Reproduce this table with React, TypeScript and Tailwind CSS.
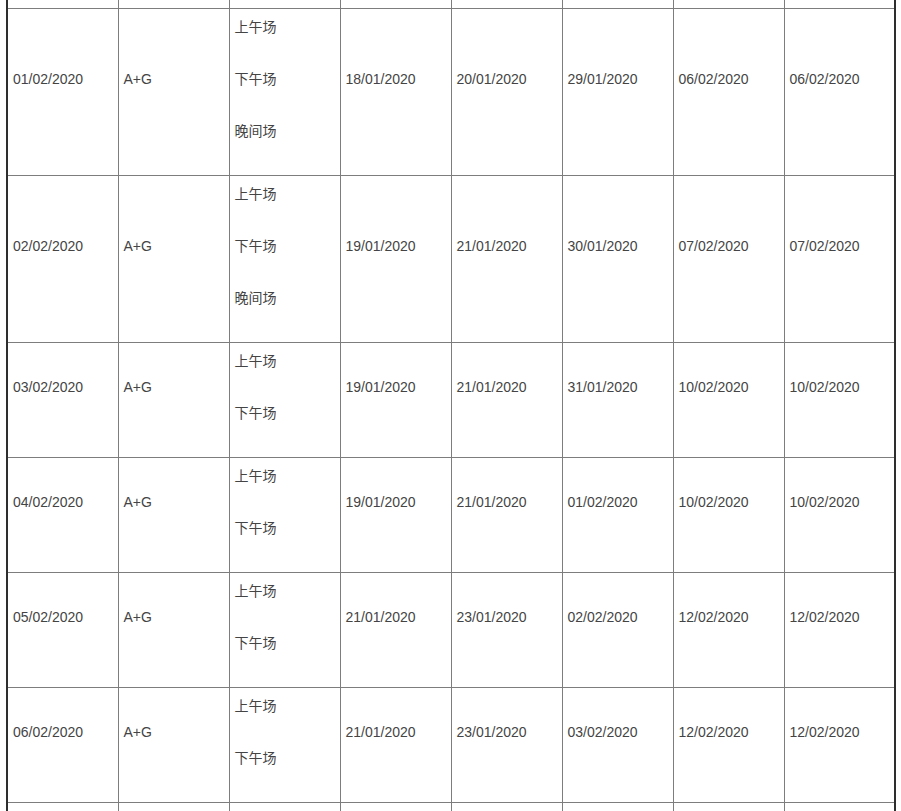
import React from "react";

type Row = {
  date: string;
  group: string;
  sessions: string[];
  dates: string[];
};

const rows: Row[] = [
  {
    date: "01/02/2020",
    group: "A+G",
    sessions: ["上午场", "下午场", "晚间场"],
    dates: ["18/01/2020", "20/01/2020", "29/01/2020", "06/02/2020", "06/02/2020"],
  },
  {
    date: "02/02/2020",
    group: "A+G",
    sessions: ["上午场", "下午场", "晚间场"],
    dates: ["19/01/2020", "21/01/2020", "30/01/2020", "07/02/2020", "07/02/2020"],
  },
  {
    date: "03/02/2020",
    group: "A+G",
    sessions: ["上午场", "下午场"],
    dates: ["19/01/2020", "21/01/2020", "31/01/2020", "10/02/2020", "10/02/2020"],
  },
  {
    date: "04/02/2020",
    group: "A+G",
    sessions: ["上午场", "下午场"],
    dates: ["19/01/2020", "21/01/2020", "01/02/2020", "10/02/2020", "10/02/2020"],
  },
  {
    date: "05/02/2020",
    group: "A+G",
    sessions: ["上午场", "下午场"],
    dates: ["21/01/2020", "23/01/2020", "02/02/2020", "12/02/2020", "12/02/2020"],
  },
  {
    date: "06/02/2020",
    group: "A+G",
    sessions: ["上午场", "下午场"],
    dates: ["21/01/2020", "23/01/2020", "03/02/2020", "12/02/2020", "12/02/2020"],
  },
];

const cell = "border border-[#7d7d7d] align-middle pt-[6px] pb-[4px] pl-[5px] pr-[5px] w-[111px]";

const Line = ({ children }: { children: React.ReactNode }) => (
  <p className="leading-6 mb-7">{children}</p>
);

export default function App() {
  return (
    <div
      className="h-[811px] w-[901px] overflow-hidden bg-white text-[14px] text-[#444]"
      style={{ fontFamily: '"Liberation Sans", Arial, "Noto Sans CJK SC", sans-serif' }}
    >
      <table className="-mt-[32px] ml-[6px] w-[890px] table-fixed border-collapse border-x-2 border-x-[#2e2e2e]">
        <tbody>
          {/* tail of the previous row, cut off by the top edge */}
          <tr className="h-[40px]">
            {Array.from({ length: 8 }).map((_, i) => (
              <td key={i} className={cell} />
            ))}
          </tr>
          {rows.map((row) => (
            <tr key={row.date}>
              <td className={cell}>
                <Line>{row.date}</Line>
              </td>
              <td className={cell}>
                <Line>{row.group}</Line>
              </td>
              <td className={cell}>
                {row.sessions.map((s) => (
                  <Line key={s}>{s}</Line>
                ))}
              </td>
              {row.dates.map((d, i) => (
                <td key={i} className={cell}>
                  <Line>{d}</Line>
                </td>
              ))}
            </tr>
          ))}
          {/* head of the next row */}
          <tr className="h-[60px]">
            {Array.from({ length: 8 }).map((_, i) => (
              <td key={i} className={cell} />
            ))}
          </tr>
        </tbody>
      </table>
    </div>
  );
}
